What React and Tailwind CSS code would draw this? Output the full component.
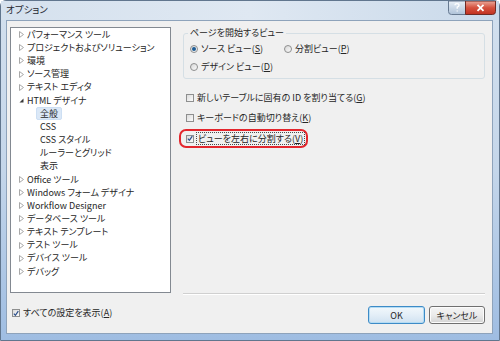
import React from 'react';

// tree entries for the options dialog
const treeItems = [
  { label: 'パフォーマンス ツール', arrow: 'closed' },
  { label: 'プロジェクトおよびソリューション', arrow: 'closed' },
  { label: '環境', arrow: 'closed' },
  { label: 'ソース管理', arrow: 'closed' },
  { label: 'テキスト エディタ', arrow: 'closed' },
  { label: 'HTML デザイナ', arrow: 'open' },
  { label: '全般', child: true, selected: true },
  { label: 'CSS', child: true },
  { label: 'CSS スタイル', child: true },
  { label: 'ルーラーとグリッド', child: true },
  { label: '表示', child: true },
  { label: 'Office ツール', arrow: 'closed' },
  { label: 'Windows フォーム デザイナ', arrow: 'closed' },
  { label: 'Workflow Designer', arrow: 'closed' },
  { label: 'データベース ツール', arrow: 'closed' },
  { label: 'テキスト テンプレート', arrow: 'closed' },
  { label: 'テスト ツール', arrow: 'closed' },
  { label: 'デバイス ツール', arrow: 'closed' },
  { label: 'デバッグ', arrow: 'closed' },
];

function Arrow({ type }) {
  if (type === 'open') {
    return (
      <svg width="5" height="7" viewBox="0 0 5 7" className="shrink-0">
        <path d="M4.5 1.5 L4.5 5.5 L0.5 5.5 Z" fill="#3a3a3a" />
      </svg>
    );
  }
  return (
    <svg width="5" height="7" viewBox="0 0 5 7" className="shrink-0">
      <path d="M0.5 0.5 L4.5 3.5 L0.5 6.5 Z" fill="#fff" stroke="#a8a8a8" strokeWidth="1" />
    </svg>
  );
}

function CheckBox({ checked }) {
  return (
    <span className="w-[8px] h-[8px] shrink-0 border border-[#8e8f8f] bg-gradient-to-br from-[#dcdcdc] to-[#fbfbfb] flex items-center justify-center">
      {checked && (
        <svg width="7" height="7" viewBox="0 0 7 7">
          <path d="M1 3.6 L2.8 5.6 L6.2 0.8" fill="none" stroke="#2b4f8c" strokeWidth="1.4" />
        </svg>
      )}
    </span>
  );
}

function Radio({ checked }) {
  return (
    <span className="w-[8px] h-[8px] shrink-0 rounded-full border border-[#8e8f8f] bg-gradient-to-br from-[#d8d8d8] to-[#fafafa] flex items-center justify-center">
      {checked && <span className="w-[4px] h-[4px] rounded-full bg-[#1d5c95]" />}
    </span>
  );
}

// help + close caption buttons
function CaptionButtons() {
  return (
    <svg width="48" height="14" viewBox="0 0 48 14" className="block shrink-0 mr-[3px]">
      <defs>
        <linearGradient id="helpg" x1="0" y1="0" x2="0" y2="1">
          <stop offset="0" stopColor="#e8eff7" />
          <stop offset="1" stopColor="#aec2d8" />
        </linearGradient>
        <linearGradient id="closeg" x1="0" y1="0" x2="0" y2="1">
          <stop offset="0" stopColor="#eba99b" />
          <stop offset="0.5" stopColor="#d5513e" />
          <stop offset="1" stopColor="#c0301f" />
        </linearGradient>
      </defs>
      <path d="M0.5 0 V10.5 Q0.5 13.5 3.5 13.5 H17.5 V0 Z" fill="url(#helpg)" stroke="#667990" />
      <path d="M17.5 0 V13.5 H44.5 Q47.5 13.5 47.5 10.5 V0 Z" fill="url(#closeg)" stroke="#6f2a24" />
      <path d="M7 4.2 Q7 2.6 9 2.6 Q11 2.6 11 4.2 Q11 5.4 9.2 6.2 V7.8 M9.2 9.4 V10.6" fill="none" stroke="#fff" strokeWidth="1.3" />
      <path d="M29.5 3.8 L35.5 9.8 M35.5 3.8 L29.5 9.8" stroke="#fff" strokeWidth="1.8" />
    </svg>
  );
}

export default function App() {
  return (
    <div className="w-[500px] h-[341px] overflow-hidden bg-white font-['Noto_Sans_CJK_JP','Noto_Sans',sans-serif] [font-feature-settings:'palt'] text-[9px] text-[#262626]">
      {/* window frame */}
      <div className="w-[500px] h-[341px] flex flex-col rounded-t-[6px] border border-[#61768e] bg-gradient-to-b from-[#d3e0ee] via-[#c4d6ea] to-[#9fbde2]">
        {/* title bar */}
        <div className="h-[19px] shrink-0 flex justify-between items-start bg-gradient-to-r from-[#d5e1ee] via-[#dfe8f2] to-[#c9d9ea]">
          <span className="pl-[5px] pt-[2px] text-[9.5px] leading-[12px] text-[#1e2630]">オプション</span>
          <CaptionButtons />
        </div>

        {/* client area */}
        <div className="ml-[5px] mr-[6px] h-[314px] shrink-0 border border-[#8ea3bb] bg-[#f0f0f0] flex">
          {/* left column */}
          <div className="w-[164px] pl-[3px] pt-[6px] flex flex-col">
            <div className="w-[161px] h-[266px] border border-[#838991] bg-white">
              {treeItems.map((item) => (
                <div key={item.label} className="h-[13.17px] flex items-center whitespace-nowrap">
                  {item.child ? (
                    <span
                      className={
                        item.selected
                          ? 'ml-[25px] px-[3px] h-[13px] flex items-center rounded-[2px] bg-[#dbe8f7] border border-[#cddff3]'
                          : 'ml-[29px]'
                      }
                    >
                      {item.label}
                    </span>
                  ) : (
                    <>
                      <span className="ml-[8px] mr-[3px] flex">
                        <Arrow type={item.arrow} />
                      </span>
                      <span>{item.label}</span>
                    </>
                  )}
                </div>
              ))}
            </div>
            <div className="mt-[14px] h-[12px] pl-[2px] flex items-center gap-[3px]">
              <CheckBox checked />
              <span>
                すべての設定を表示(<u>A</u>)
              </span>
            </div>
          </div>

          {/* right column */}
          <div className="flex-1 ml-[12px] mr-[7px] pt-[12px] flex flex-col">
            <div className="border border-[#d5dfe5] rounded-[3px] pb-[5px]">
              <span className="-mt-[7px] ml-[4px] px-[2px] w-fit block leading-[12px] bg-[#f0f0f0]">
                ページを開始するビュー
              </span>
              <div className="mt-[4px] h-[12px] flex items-center pl-[6px]">
                <Radio checked />
                <span className="ml-[3px] w-[83px]">
                  ソース ビュー(<u>S</u>)
                </span>
                <Radio />
                <span className="ml-[3px]">
                  分割ビュー(<u>P</u>)
                </span>
              </div>
              <div className="mt-[6px] h-[12px] flex items-center pl-[6px]">
                <Radio />
                <span className="ml-[3px]">
                  デザイン ビュー(<u>D</u>)
                </span>
              </div>
            </div>

            <div className="mt-[13px] h-[12px] pl-[3px] flex items-center gap-[3px]">
              <CheckBox />
              <span>
                新しいテーブルに固有の ID を割り当てる(<u>G</u>)
              </span>
            </div>
            <div className="mt-[8px] h-[12px] pl-[3px] flex items-center gap-[3px]">
              <CheckBox />
              <span>
                キーボードの自動切り替え(<u>K</u>)
              </span>
            </div>
            <div className="mt-[5px] -ml-[4px] w-[129px] h-[19px] border-2 border-[#e3262d] rounded-[7px] pl-[5px] flex items-center gap-[2px]">
              <CheckBox checked />
              <span className="border border-dotted border-[#4a4a4a] px-px leading-[11px]">
                ビューを左右に分割する(<u>V</u>)
              </span>
            </div>

            <div className="flex-1" />
            <div className="h-[2px] border-t border-[#d0d0d0] border-b border-b-white" />
            <div className="mt-[11px] mb-[9px] flex justify-end gap-[4px]">
              <button className="w-[57px] h-[18px] rounded-[3px] border border-[#3d8bc7] bg-gradient-to-b from-[#f2f8fc] via-[#e3eef7] to-[#cfe2f1] shadow-[inset_0_0_0_1px_#b4dcf4] text-[9px] leading-none">
                OK
              </button>
              <button className="w-[56px] h-[18px] rounded-[3px] border border-[#707070] bg-gradient-to-b from-[#f4f4f4] via-[#ebebeb] to-[#d4d4d4] shadow-[inset_0_0_0_1px_#fcfcfc] text-[9px] leading-none">
                キャンセル
              </button>
            </div>
          </div>
        </div>
      </div>
    </div>
  );
}
